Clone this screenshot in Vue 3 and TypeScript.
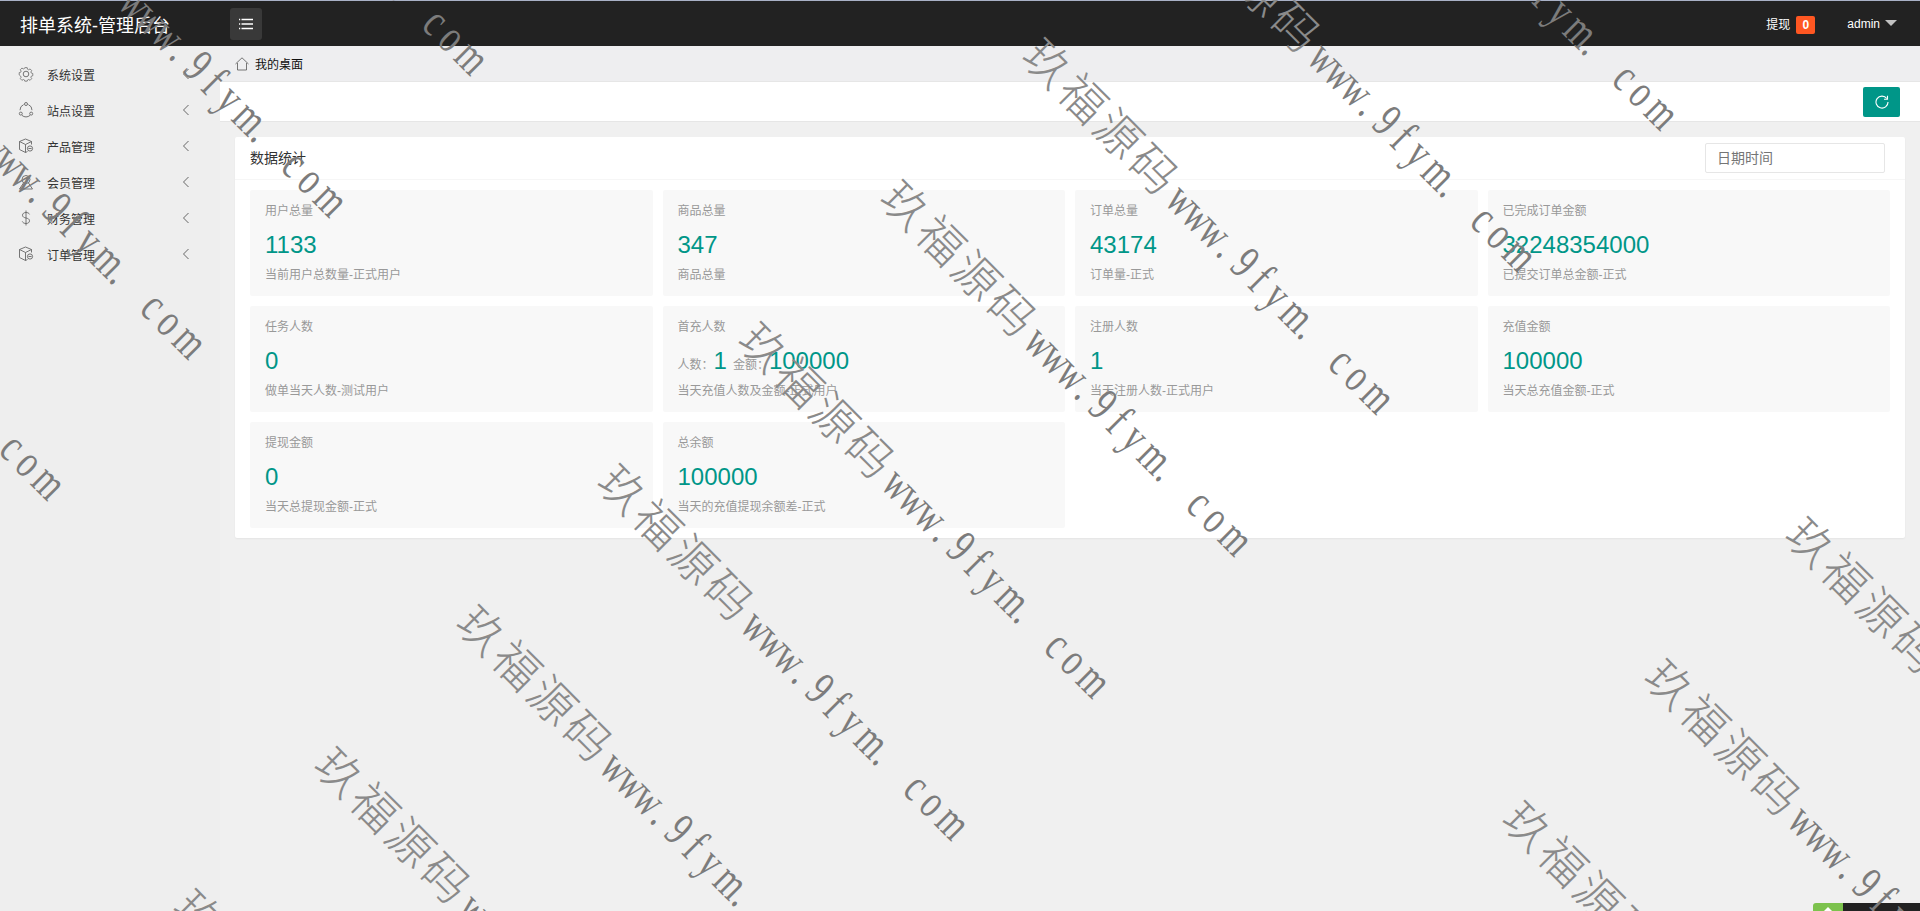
<script setup lang="ts">
interface StatCard {
  title: string
  value?: string
  desc: string
  pair?: { count: string; amount: string }
}

const menus = [
  { name: '系统设置', icon: 'gear' },
  { name: '站点设置', icon: 'share' },
  { name: '产品管理', icon: 'box' },
  { name: '会员管理', icon: 'user' },
  { name: '财务管理', icon: 'dollar' },
  { name: '订单管理', icon: 'box' },
]

const cards: StatCard[] = [
  { title: '用户总量', value: '1133', desc: '当前用户总数量-正式用户' },
  { title: '商品总量', value: '347', desc: '商品总量' },
  { title: '订单总量', value: '43174', desc: '订单量-正式' },
  { title: '已完成订单金额', value: '32248354000', desc: '已提交订单总金额-正式' },
  { title: '任务人数', value: '0', desc: '做单当天人数-测试用户' },
  { title: '首充人数', pair: { count: '1', amount: '100000' }, desc: '当天充值人数及金额-正式用户' },
  { title: '注册人数', value: '1', desc: '当天注册人数-正式用户' },
  { title: '充值金额', value: '100000', desc: '当天总充值金额-正式' },
  { title: '提现金额', value: '0', desc: '当天总提现金额-正式' },
  { title: '总余额', value: '100000', desc: '当天的充值提现余额差-正式' },
]

// top-left corner of the first glyph of each diagonal watermark
const marks = [
  [119, -300], [-22, -158], [-163, -16], [-304, 125],
  [1309, -245], [1167, -103], [1025, 39], [883, 181], [741, 323], [600, 465], [459, 606], [317, 748], [176, 890],
  [1788, 518], [1647, 660], [1505, 802],
]
const markLatin = 'www.9fym. com'.split('')
</script>

<template>
  <div class="page">
    <header class="topbar">
      <div class="brand">排单系统-管理后台</div>
      <button class="menu-btn">
        <svg width="16" height="16" viewBox="0 0 16 16" fill="none" stroke="#fff" stroke-width="1.4">
          <path d="M3.5 3.5H15M3.5 8H15M3.5 12.5H15" />
          <path d="M1 3.5h1.2M1 8h1.2M1 12.5h1.2" />
        </svg>
      </button>
      <div class="top-right">
        <span class="withdraw">提现</span>
        <span class="badge">0</span>
        <span class="user">admin</span>
        <i class="caret"></i>
      </div>
    </header>

    <div class="body">
      <aside class="sidebar">
        <div v-for="m in menus" :key="m.name" class="menu-item">
          <svg class="menu-icon" width="16" height="16" viewBox="0 0 16 16" fill="none" stroke="#666" stroke-width="0.9">
            <template v-if="m.icon === 'gear'">
              <path d="M6.6 1h2.8l.4 1.9 1.3.6 1.7-1 1.9 2-1 1.6.6 1.3 1.7.5v2.6l-1.7.5-.6 1.3 1 1.6-1.9 2-1.7-1-1.3.6-.4 1.4H6.6l-.4-1.4-1.3-.6-1.7 1-1.9-2 1-1.6-.6-1.3L0 9.5V6.9l1.7-.5.6-1.3-1-1.6 1.9-2 1.7 1 1.3-.6z" transform="translate(1.2 .8) scale(.85)" />
              <circle cx="8" cy="8" r="2.8" />
            </template>
            <template v-else-if="m.icon === 'share'">
              <path d="M5.6 2.6A6 6 0 0 0 2 8.2M10.4 2.6A6 6 0 0 1 14 8.2M4 13.4a6 6 0 0 0 8 0" />
              <circle cx="8" cy="2" r="1.5" />
              <circle cx="2.8" cy="11.6" r="1.5" />
              <circle cx="13.2" cy="11.6" r="1.5" />
            </template>
            <template v-else-if="m.icon === 'box'">
              <path d="M7.5 1 1.5 3.5v8l6 3 2-1M7.5 1l6 2.5v3M1.5 3.5l6 3 6-3M7.5 6.5v8" />
              <circle cx="12" cy="10.5" r="2.6" />
              <path d="M10.4 10.5h3.2" />
            </template>
            <template v-else-if="m.icon === 'user'">
              <circle cx="8" cy="5.5" r="4" />
              <path d="M5.5 9 1.5 15h13l-4-6" />
            </template>
            <template v-else>
              <path d="M11.5 4.4C11 3 9.6 2.5 8 2.5c-2 0-3.5 1-3.5 2.7C4.500 7 6 7.500 8 8s3.500 1 3.500 2.800c0 1.700-1.500 2.700-3.500 2.700-1.700 0-3.200-.7-3.700-2.100M8 .5v15" />
            </template>
          </svg>
          <span class="menu-name">{{ m.name }}</span>
          <svg class="chevron" width="8" height="12" viewBox="0 0 8 12" fill="none" stroke="#666" stroke-width="1">
            <path d="M6.5 1 1.500 6l5 5" />
          </svg>
        </div>
      </aside>

      <main class="main">
        <div class="crumbs">
          <svg width="14" height="14" viewBox="0 0 14 14" fill="none" stroke="#666" stroke-width="0.9">
            <path d="M.5 7 7 .8 13.500 7M2.500 6v7h9V6" />
          </svg>
          <span>我的桌面</span>
        </div>
        <div class="toolbar">
          <button class="refresh">
            <svg width="14" height="14" viewBox="0 0 14 14" fill="none" stroke="#fff" stroke-width="1.1">
              <path d="M11.800 3.500A6 6 0 1 0 13 7" />
              <path d="M12.500 .8v3.400H9" />
            </svg>
          </button>
        </div>

        <section class="panel">
          <div class="panel-head">
            <span class="panel-title">数据统计</span>
            <div class="date-input">日期时间</div>
          </div>
          <div class="grid">
            <div v-for="c in cards" :key="c.title" class="card">
              <div class="card-title">{{ c.title }}</div>
              <div v-if="c.pair" class="card-value">
                <small>人数：</small>{{ c.pair.count }}<small class="amount">金额：</small>{{ c.pair.amount }}
              </div>
              <div v-else class="card-value">{{ c.value }}</div>
              <div class="card-desc">{{ c.desc }}</div>
            </div>
          </div>
        </section>
      </main>
    </div>

    <div class="corner">
      <span class="corner-green"><i></i></span>
      <span class="corner-dark"></span>
    </div>

    <div class="watermarks">
      <span
        v-for="(p, i) in marks"
        :key="i"
        class="mark"
        :style="{ left: p[0] + 6.5 + 'px', top: p[1] - 20 + 'px' }"
      >玖福源码<b v-for="(ch, j) in markLatin" :key="j" class="mark-ch">{{ ch }}</b></span>
    </div>
  </div>
</template>

<style>
html, body {
  margin: 0;
  background: #f0f0f0;
}
</style>

<style scoped>
.page {
  position: relative;
  width: 100%;
  height: 911px;
  overflow: hidden;
  display: flex;
  flex-direction: column;
  background: #f0f0f0;
  font-family: "Liberation Sans", "Noto Sans CJK SC", sans-serif;
  font-size: 12px;
  color: #333;
}

.topbar {
  flex: none;
  height: 45px;
  display: flex;
  align-items: center;
  background: #222;
  border-top: 1px solid #a9b1c6;
  color: #fff;
}
.brand {
  width: 210px;
  padding-left: 20px;
  font-size: 18px;
}
.menu-btn {
  width: 32px;
  height: 32px;
  padding: 0;
  display: flex;
  align-items: center;
  justify-content: center;
  background: #393939;
  border: none;
  border-radius: 3px;
}
.top-right {
  margin-left: auto;
  display: flex;
  align-items: center;
  padding-right: 23px;
}
.badge {
  width: 19px;
  height: 18px;
  margin-left: 6px;
  margin-top: 2px;
  background: #ff5722;
  border-radius: 2px;
  text-align: center;
  line-height: 18px;
  font-weight: 700;
}
.user {
  margin-left: 32px;
}
.caret {
  width: 0;
  height: 0;
  margin-left: 5px;
  margin-bottom: 2px;
  border-left: 6px solid transparent;
  border-right: 6px solid transparent;
  border-top: 6px solid #c2c2c2;
}

.body {
  flex: 1;
  display: flex;
  min-height: 0;
}
.sidebar {
  flex: none;
  width: 220px;
  padding-top: 10px;
  box-sizing: border-box;
  background: #eee;
}
.menu-item {
  height: 36px;
  display: flex;
  align-items: center;
  padding: 0 30px 0 18px;
}
.menu-icon {
  flex: none;
}
.menu-name {
  margin-left: 13px;
  flex: 1;
}

.main {
  flex: 1;
  min-width: 0;
}
.crumbs {
  height: 35px;
  display: flex;
  align-items: center;
  gap: 6px;
  padding-left: 15px;
  background: #eeeef0;
  color: #111;
}
.toolbar {
  height: 39px;
  display: flex;
  align-items: center;
  justify-content: flex-end;
  padding-right: 20px;
  background: #fff;
  border-top: 1px solid #e6e6e6;
  border-bottom: 1px solid #e6e6e6;
}
.refresh {
  width: 37px;
  height: 30px;
  padding: 0;
  display: flex;
  align-items: center;
  justify-content: center;
  background: #009688;
  border: none;
  border-radius: 2px;
}
.panel {
  margin: 15px 15px 0;
  background: #fff;
  border-radius: 2px;
  box-shadow: 0 1px 2px rgba(0, 0, 0, 0.05);
}
.panel-head {
  height: 42px;
  display: flex;
  align-items: center;
  justify-content: space-between;
  padding: 0 20px 0 15px;
  border-bottom: 1px solid #f6f6f6;
  font-size: 14px;
}
.panel-title {
  margin-top: -2px;
}
.date-input {
  width: 180px;
  height: 30px;
  box-sizing: border-box;
  padding-left: 11px;
  border: 1px solid #e6e6e6;
  border-radius: 2px;
  line-height: 28px;
  color: #757575;
}
.grid {
  display: grid;
  grid-template-columns: repeat(4, 1fr);
  gap: 10px;
  padding: 10px 15px;
}
.card {
  height: 106px;
  box-sizing: border-box;
  padding: 13px 15px 0;
  background: #f8f8f8;
  border-radius: 2px;
  color: #999;
}
.card-title {
  line-height: 16px;
}
.card-value {
  margin-top: 8px;
  height: 36px;
  line-height: 36px;
  font-size: 24px;
  color: #009688;
}
.card-value small {
  font-size: 12px;
  color: #999;
}
.card-value .amount {
  margin-left: 6px;
}
.card-desc {
  margin-top: 4px;
  line-height: 16px;
}

.corner {
  position: absolute;
  right: 0;
  bottom: 0;
  display: flex;
  height: 8px;
}
.corner-green {
  width: 30px;
  display: flex;
  justify-content: center;
  background: #7cc24d;
  border-radius: 3px 0 0 0;
}
.corner-green i {
  width: 0;
  height: 0;
  margin-top: 4px;
  border-left: 4px solid transparent;
  border-right: 4px solid transparent;
  border-bottom: 4px solid #fff;
}
.corner-dark {
  width: 77px;
  background: #222;
}

.watermarks {
  position: absolute;
  inset: 0;
  pointer-events: none;
}
.mark {
  position: absolute;
  white-space: nowrap;
  line-height: 50px;
  font-size: 46px;
  letter-spacing: 4px;
  font-family: "Noto Sans CJK SC", "Liberation Serif", serif;
  font-weight: 300;
  color: #8a8a8a;
  transform: rotate(45deg);
  transform-origin: 0 50%;
}
.mark-ch {
  display: inline-block;
  width: 23px;
  letter-spacing: 0;
  font-family: "Liberation Serif", serif;
  font-size: 48px;
  font-weight: 400;
  text-align: center;
  color: #7c7c7c;
  transform: scaleX(0.7);
}
</style>
